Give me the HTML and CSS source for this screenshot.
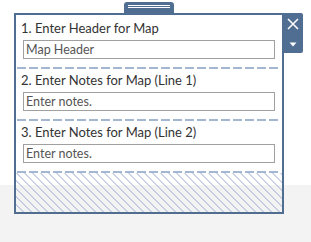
FILE: index.html
```html
<!DOCTYPE html>
<html>
	<head>
		<meta charset="utf-8">
		<title>Map Notes</title>
		<link rel="stylesheet" href="styles.css">
	</head>
	<body>
		<div class="widget">
			<!-- drag handle -->
			<div class="tab"><span></span><span></span></div>

			<div class="frame">
				<div class="panel">
					<div class="section">
						<div class="label">1. Enter Header for Map</div>
						<input class="field" type="text" value="Map Header">
					</div>
					<div class="section">
						<div class="label">2. Enter Notes for Map (Line 1)</div>
						<input class="field" type="text" placeholder="Enter notes.">
					</div>
					<div class="section">
						<div class="label">3. Enter Notes for Map (Line 2)</div>
						<input class="field" type="text" placeholder="Enter notes.">
					</div>
					<div class="hatch"></div>
				</div>

				<!-- close / menu buttons -->
				<div class="side">
					<svg class="close" width="12" height="12" viewBox="0 0 12 12">
						<path d="M1 1 L11 11 M11 1 L1 11" stroke="#fff" stroke-width="1.5" fill="none"/>
					</svg>
					<svg class="caret" width="8" height="5" viewBox="0 0 8 5">
						<path d="M0.5 0.5 H7.5 L4 4.5 Z" fill="#fff"/>
					</svg>
				</div>
			</div>
		</div>
	</body>
</html>
```

FILE: styles.css
```css
body{
	margin: 0;
	background-color: #f3f3f3;
	background-image: linear-gradient(#fff, #fff);
	background-size: 100% 185px;
	background-repeat: no-repeat;
	font-family: Lato, "Liberation Sans", sans-serif;
}

.widget{
	padding-top: 2px;
	margin-left: 14px;
}

/* ########## handle on top */
.tab{
	width: 50px;
	height: 11px;
	margin-left: 110px;
	background-color: #506e91;
	border-radius: 3px 3px 0 0;
	display: flex;
	flex-direction: column;
	align-items: center;
	padding-top: 3px;
	box-sizing: border-box;
	gap: 1px;
}
.tab span{
	width: 42px;
	height: 1px;
	background-color: #fff;
}

.frame{
	display: flex;
	align-items: flex-start;
}

.panel{
	width: 270px;
	box-sizing: border-box;
	border: 2px solid #506e91;
	padding-top: 2px;
	/* white behind the fields, the hatch shows the page */
	background: linear-gradient(#fff 170px, transparent 170px);
}

/* ########## sections, dashed line below each */
.section{
	padding-top: 3px;
	padding-bottom: 10px;
	background-image: repeating-linear-gradient(90deg, #a4b7d2 0 9px, transparent 9px 12px);
	background-size: calc(100% - 4px) 2px;
	background-position: 1px bottom;
	background-repeat: no-repeat;
}

.label{
	font-size: 13px;
	line-height: 16px;
	color: #333;
	padding-left: 5px;
	margin-bottom: 4px;
}

.field{
	display: block;
	width: 252px;
	height: 19px;
	margin: 0 0 0 7px;
	box-sizing: border-box;
	border: 1px solid #a0a0a0;
	padding: 0 2px;
	font-family: Lato, "Liberation Sans", sans-serif;
	font-size: 12.5px;
	color: #555;
	outline: none;
}
.field::placeholder{
	color: #555;
}

.hatch{
	height: 39px;
	background-image: repeating-linear-gradient(45deg, transparent 0 4.8px, rgba(170, 182, 215, 0.6) 4.8px 5.66px);
}

/* ########## right buttons */
.side{
	width: 20px;
	height: 40px;
	margin-left: -1px;
	background-color: #506e91;
	display: flex;
	flex-direction: column;
	align-items: center;
	border-radius: 0 2px 2px 0;
}
.close{
	margin-top: 5px;
}
.caret{
	margin-top: 12px;
}
```
